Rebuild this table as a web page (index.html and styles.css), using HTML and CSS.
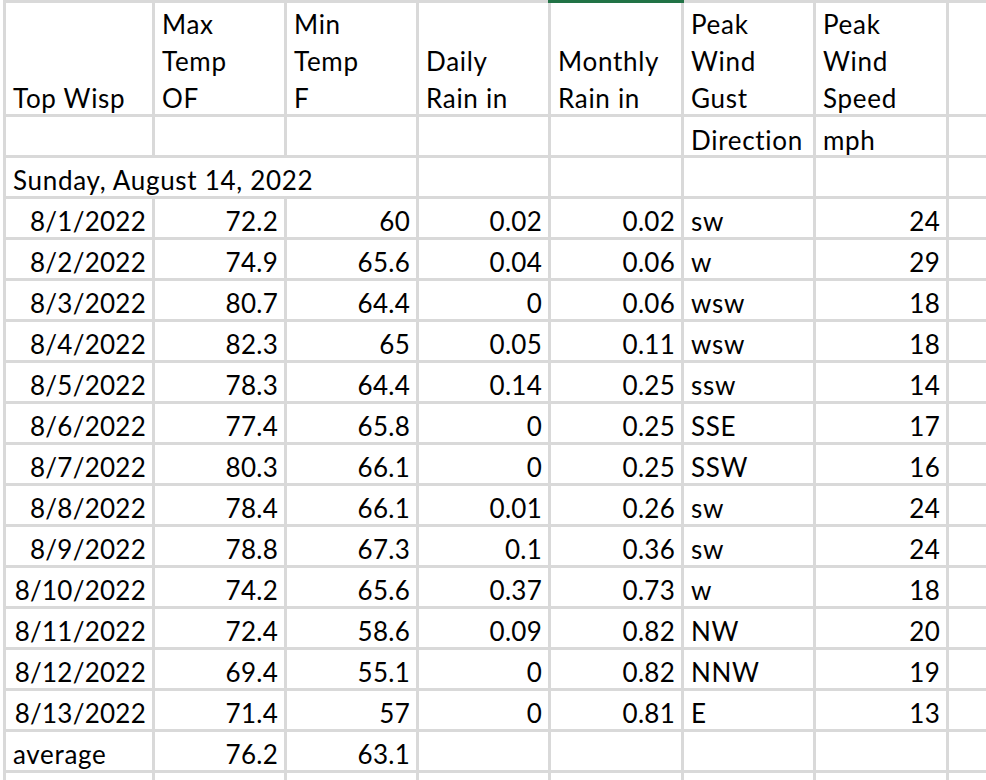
FILE: index.html
```html
<!DOCTYPE html>
<html lang="en">
<head>
<meta charset="utf-8">
<title>Top Wisp</title>
<link rel="stylesheet" href="styles.css">
</head>
<body>
<table class="sheet">
  <colgroup>
    <col class="c-date"><col class="c-n"><col class="c-n"><col class="c-n"><col class="c-n5"><col class="c-n"><col class="c-n5"><col class="c-n">
  </colgroup>
  <tr class="head">
    <td><div class="t">Top Wisp</div></td>
    <td><div class="t">Max<br>Temp<br>OF</div></td>
    <td><div class="t">Min<br>Temp<br>F</div></td>
    <td><div class="t">Daily<br>Rain in</div></td>
    <td class="sel"><div class="t">Monthly<br>Rain in</div></td>
    <td><div class="t">Peak<br>Wind<br>Gust</div></td>
    <td><div class="t">Peak<br>Wind<br>Speed</div></td>
    <td></td>
  </tr>
  <tr class="sub">
    <td></td><td></td><td></td><td></td><td></td><td>Direction</td><td>mph</td><td></td>
  </tr>
  <tr>
    <td colspan="3">Sunday, August 14, 2022</td><td></td><td></td><td></td><td></td><td></td>
  </tr>
  <tr><td class="r">8/1/2022</td><td class="r">72.2</td><td class="r">60</td><td class="r">0.02</td><td class="r">0.02</td><td>sw</td><td class="r">24</td><td></td></tr>
  <tr><td class="r">8/2/2022</td><td class="r">74.9</td><td class="r">65.6</td><td class="r">0.04</td><td class="r">0.06</td><td>w</td><td class="r">29</td><td></td></tr>
  <tr><td class="r">8/3/2022</td><td class="r">80.7</td><td class="r">64.4</td><td class="r">0</td><td class="r">0.06</td><td>wsw</td><td class="r">18</td><td></td></tr>
  <tr><td class="r">8/4/2022</td><td class="r">82.3</td><td class="r">65</td><td class="r">0.05</td><td class="r">0.11</td><td>wsw</td><td class="r">18</td><td></td></tr>
  <tr><td class="r">8/5/2022</td><td class="r">78.3</td><td class="r">64.4</td><td class="r">0.14</td><td class="r">0.25</td><td>ssw</td><td class="r">14</td><td></td></tr>
  <tr><td class="r">8/6/2022</td><td class="r">77.4</td><td class="r">65.8</td><td class="r">0</td><td class="r">0.25</td><td>SSE</td><td class="r">17</td><td></td></tr>
  <tr><td class="r">8/7/2022</td><td class="r">80.3</td><td class="r">66.1</td><td class="r">0</td><td class="r">0.25</td><td>SSW</td><td class="r">16</td><td></td></tr>
  <tr><td class="r">8/8/2022</td><td class="r">78.4</td><td class="r">66.1</td><td class="r">0.01</td><td class="r">0.26</td><td>sw</td><td class="r">24</td><td></td></tr>
  <tr><td class="r">8/9/2022</td><td class="r">78.8</td><td class="r">67.3</td><td class="r">0.1</td><td class="r">0.36</td><td>sw</td><td class="r">24</td><td></td></tr>
  <tr><td class="r">8/10/2022</td><td class="r">74.2</td><td class="r">65.6</td><td class="r">0.37</td><td class="r">0.73</td><td>w</td><td class="r">18</td><td></td></tr>
  <tr><td class="r">8/11/2022</td><td class="r">72.4</td><td class="r">58.6</td><td class="r">0.09</td><td class="r">0.82</td><td>NW</td><td class="r">20</td><td></td></tr>
  <tr><td class="r">8/12/2022</td><td class="r">69.4</td><td class="r">55.1</td><td class="r">0</td><td class="r">0.82</td><td>NNW</td><td class="r">19</td><td></td></tr>
  <tr><td class="r">8/13/2022</td><td class="r">71.4</td><td class="r">57</td><td class="r">0</td><td class="r">0.81</td><td>E</td><td class="r">13</td><td></td></tr>
  <tr><td>average</td><td class="r">76.2</td><td class="r">63.1</td><td></td><td></td><td></td><td></td><td></td></tr>
  <tr><td></td><td></td><td></td><td></td><td></td><td></td><td></td><td></td></tr>
</table>
</body>
</html>
```

FILE: styles.css
```css
html, body {
  margin: 0;
  padding: 0;
  background: #ffffff;
  overflow: hidden;
}

body {
  width: 986px;
  height: 780px;
}

.sheet {
  margin-left: 3px;
  table-layout: fixed;
  width: 1078px;
  border-collapse: separate;
  border-spacing: 3px;
  background: #d9d9d9;
  font-family: "Lato", "Carlito", sans-serif;
  font-size: 26px;
  color: #000000;
}

.c-date { width: 146px; }
.c-n { width: 129px; }
.c-n5 { width: 130px; }

.sheet td {
  background: #ffffff;
  height: 38px;
  padding: 0 6px 0 7px;
  vertical-align: bottom;
  line-height: 32px;
  letter-spacing: 0.7px;
  white-space: nowrap;
  overflow: hidden;
  box-sizing: border-box;
}

.sheet td.r {
  text-align: right;
  letter-spacing: 0.25px;
  padding-right: 6px;
}

.sheet .head td {
  height: 111px;
  overflow: visible;
}

.sheet .head .t {
  line-height: 36.7px;
  margin-bottom: -2.6px;
}

.sheet .sub td {
  line-height: 30px;
}

.sheet td.sel {
  position: relative;
}

.sheet td.sel::before {
  content: "";
  position: absolute;
  top: -3px;
  left: -3px;
  right: -3px;
  height: 3px;
  background: #217346;
}
```
